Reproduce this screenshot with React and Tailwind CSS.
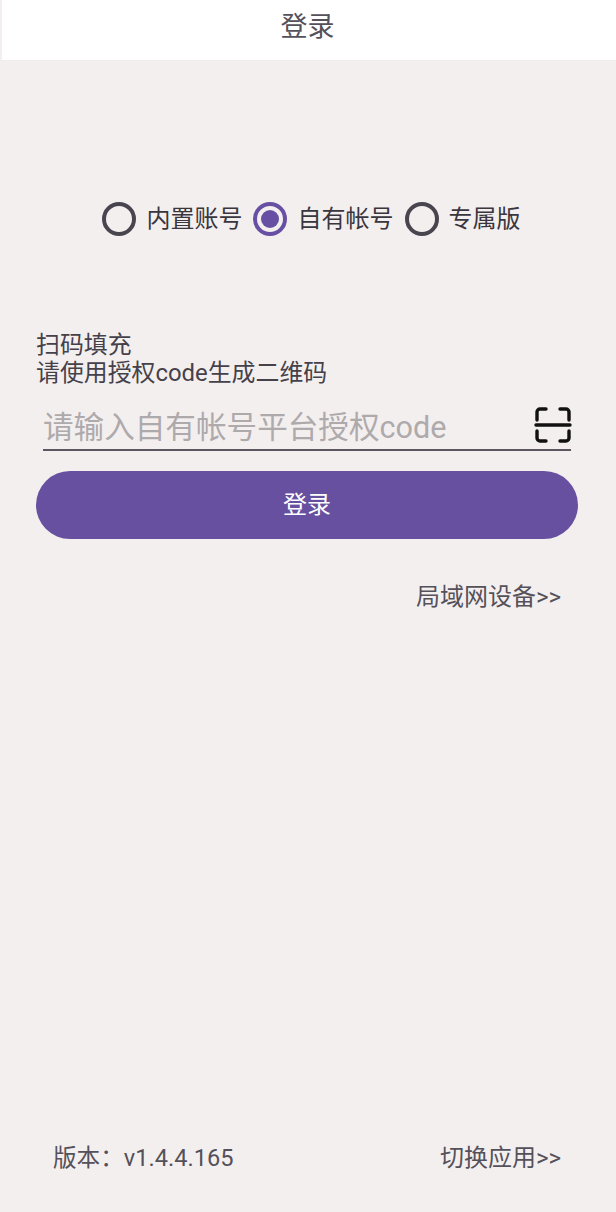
import React from "react";

const font = "font-['Roboto','Noto_Sans_CJK_SC',sans-serif]";

function Radio({ label, checked, labelClass }) {
  return (
    <div className="flex items-center">
      <div
        className={
          "w-[34px] h-[34px] rounded-full border-[4px] flex items-center justify-center " +
          (checked ? "border-[#6750a4]" : "border-[#49454f]")
        }
      >
        {checked && <div className="w-[18px] h-[18px] rounded-full bg-[#6750a4]" />}
      </div>
      <span className={"text-[24px] leading-[34px] text-[#3a363e] " + labelClass}>{label}</span>
    </div>
  );
}

export default function App() {
  return (
    <div className={"w-[616px] h-[1212px] bg-[#f4efef] flex flex-col overflow-hidden " + font}>
      <div className="h-[61px] shrink-0 bg-white ml-[2px] border-b border-[#efeceb] flex items-center justify-center">
        <span className="text-[27px] leading-[36px] text-[#55515a] -ml-[3px] -mt-[7px]">登录</span>
      </div>

      <div className="flex justify-center pl-[6px] pt-[141px]">
        <Radio label="内置账号" labelClass="ml-[11px] mr-[10px]" />
        <Radio label="自有帐号" checked labelClass="ml-[11px] mr-[11px]" />
        <Radio label="专属版" labelClass="ml-[10px]" />
      </div>

      <div className="pl-[36px] pt-[95px] text-[23.9px] leading-[28px] text-[#45414a]">
        <div>扫码填充</div>
        <div>请使用授权code生成二维码</div>
      </div>

      <div className="ml-[43px] mr-[45px] mt-[6px] h-[58px] border-b-2 border-[#5b5760] flex items-center justify-between">
        <span className="text-[30.6px] leading-[40px] text-[#aeaaac] mt-[14px]">请输入自有帐号平台授权code</span>
        <svg width="38" height="38" viewBox="0 0 38 38" fill="none" stroke="#111" strokeWidth="3.4" strokeLinecap="round" strokeLinejoin="round" className="mr-[-1px] mt-[8px]">
          <path d="M3 14V6a3 3 0 0 1 3-3h6" />
          <path d="M26 3h6a3 3 0 0 1 3 3v8" />
          <path d="M2 19h34" />
          <path d="M3 25v7a3 3 0 0 0 3 3h6" />
          <path d="M26 35h6a3 3 0 0 0 3-3v-7" />
        </svg>
      </div>

      <div className="ml-[36px] mr-[38px] mt-[20px] h-[68px] rounded-full bg-[#67509f] flex items-center justify-center">
        <span className="text-[24px] text-white">登录</span>
      </div>

      <div className="flex justify-end pr-[55px] pt-[40px] text-[24px] leading-[36px] text-[#55515a]">
        局域网设备&gt;&gt;
      </div>

      <div className="mt-auto mb-[36px] pr-[55px] pl-[53px] flex justify-between text-[24px] leading-[36px] text-[#55515a]">
        <span className="text-[23.6px]">版本：v1.4.4.165</span>
        <span>切换应用&gt;&gt;</span>
      </div>
    </div>
  );
}
